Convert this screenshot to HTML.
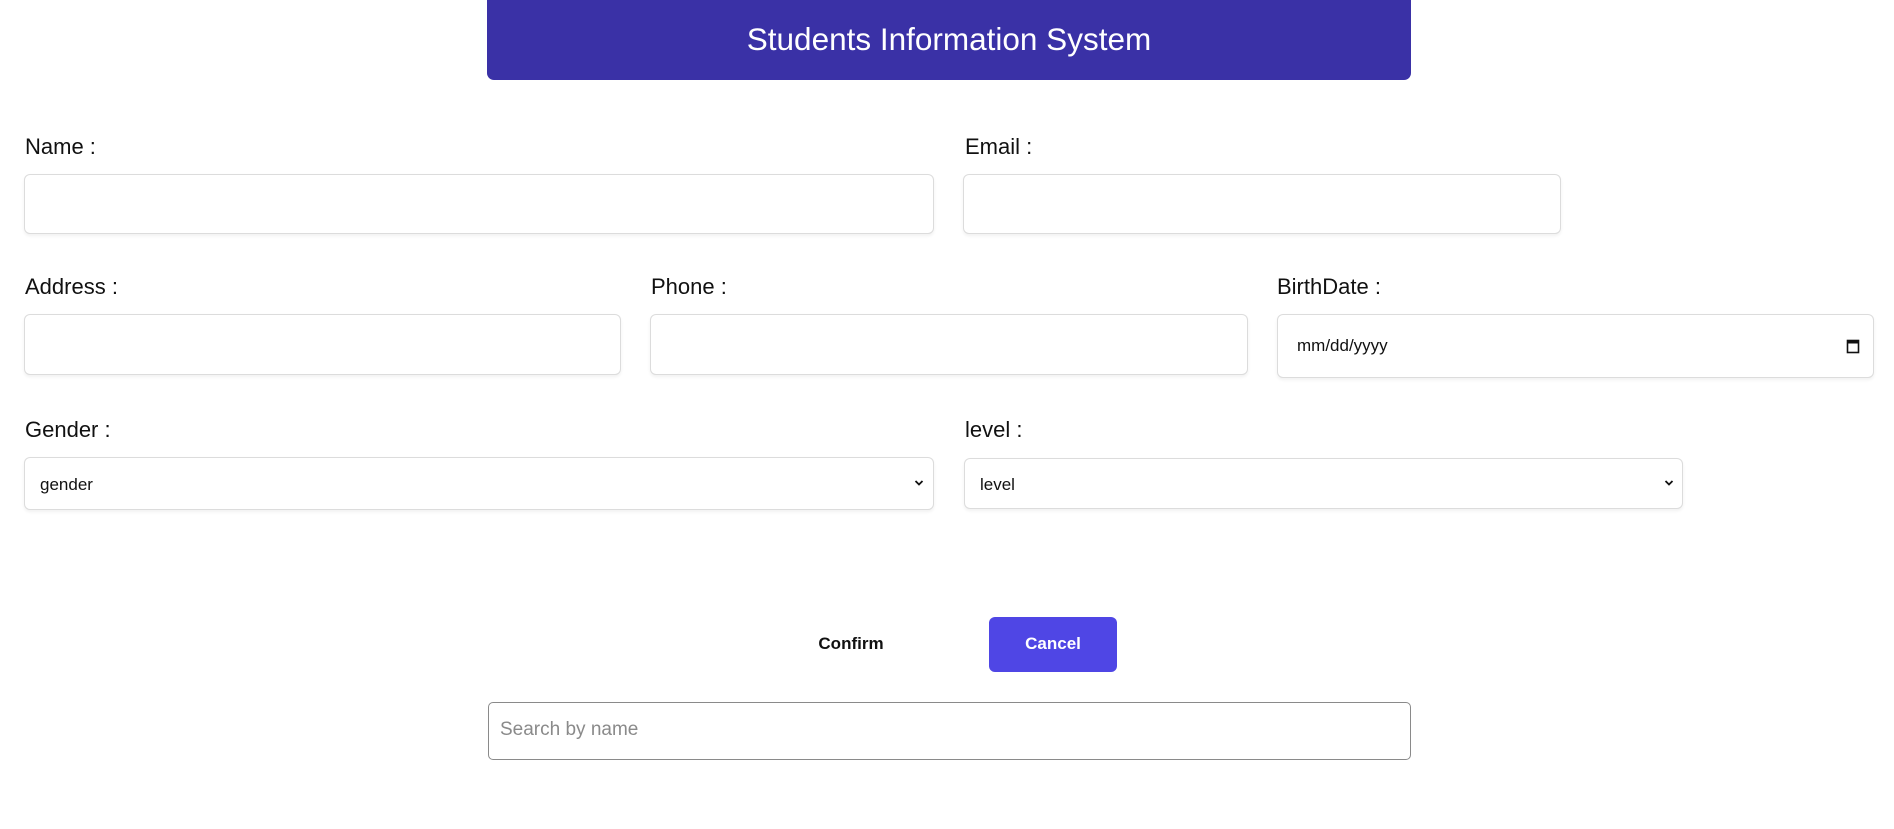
<!DOCTYPE html>
<html><head><meta charset="utf-8"><style>
*{box-sizing:border-box;margin:0;padding:0}
body{width:1894px;height:829px;background:#fff;font-family:"Liberation Sans",Arial,sans-serif;position:relative;overflow:hidden;color:#111}
.abs{position:absolute}
.hdr{left:487px;top:0;width:924px;height:80px;background:#3a31a6;border-radius:0 0 7px 7px;color:#fff;font-size:31.5px;text-align:center;line-height:79px}
.lbl{font-size:22px;color:#111;line-height:26px}
.box{border:1px solid #dcdcdc;border-radius:6px;background:#fff;box-shadow:0 2px 3px rgba(0,0,0,0.06)}
.txt{font-size:17px;color:#111}
</style></head><body>
<div class="abs hdr">Students Information System</div>

<div class="abs lbl" style="left:25px;top:134px">Name :</div>
<div class="abs box" style="left:24px;top:174px;width:910px;height:60px"></div>
<div class="abs lbl" style="left:965px;top:134px">Email :</div>
<div class="abs box" style="left:963px;top:174px;width:598px;height:60px"></div>

<div class="abs lbl" style="left:25px;top:274px">Address :</div>
<div class="abs box" style="left:24px;top:314px;width:597px;height:61px"></div>
<div class="abs lbl" style="left:651px;top:274px">Phone :</div>
<div class="abs box" style="left:650px;top:314px;width:598px;height:61px"></div>
<div class="abs lbl" style="left:1277px;top:274px">BirthDate :</div>
<div class="abs box" style="left:1277px;top:314px;width:597px;height:64px"></div>
<div class="abs txt" style="left:1297px;top:336px">mm/dd/yyyy</div>
<svg class="abs" style="left:1846px;top:338px" width="14" height="16" viewBox="0 0 14 16"><rect x="1.5" y="2.5" width="11" height="12" fill="none" stroke="#111" stroke-width="1.6"/><rect x="1.5" y="2.5" width="11" height="3" fill="#111"/></svg>

<div class="abs lbl" style="left:25px;top:417px">Gender :</div>
<div class="abs box" style="left:24px;top:457px;width:910px;height:53px"></div>
<div class="abs txt" style="left:40px;top:475px">gender</div>
<svg class="abs" style="left:914px;top:479px" width="10" height="8" viewBox="0 0 10 8"><path d="M1.5 2 L5 5.5 L8.5 2" fill="none" stroke="#111" stroke-width="1.8"/></svg>
<div class="abs lbl" style="left:965px;top:417px">level :</div>
<div class="abs box" style="left:964px;top:458px;width:719px;height:51px"></div>
<div class="abs txt" style="left:980px;top:475px">level</div>
<svg class="abs" style="left:1664px;top:479px" width="10" height="8" viewBox="0 0 10 8"><path d="M1.5 2 L5 5.5 L8.5 2" fill="none" stroke="#111" stroke-width="1.8"/></svg>

<div class="abs" style="left:790px;top:634px;width:122px;text-align:center;font-size:17px;font-weight:bold;color:#111">Confirm</div>
<div class="abs" style="left:989px;top:617px;width:128px;height:55px;background:#4f46e5;border-radius:6px;color:#fff;font-size:17px;font-weight:bold;text-align:center;line-height:54px">Cancel</div>

<div class="abs" style="left:488px;top:702px;width:923px;height:58px;border:1.5px solid #8a8a8a;border-radius:5px"></div>
<div class="abs" style="left:500px;top:719px;font-size:19px;color:#8a8a8a">Search by name</div>
</body></html>
